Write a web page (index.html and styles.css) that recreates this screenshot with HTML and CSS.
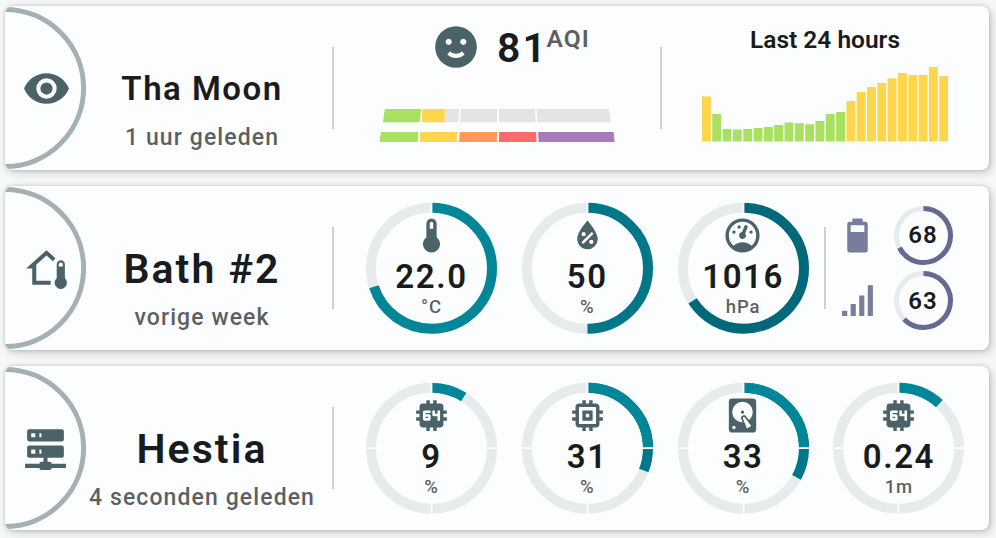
FILE: index.html
```html
<!DOCTYPE html>
<html lang="nl">
<head>
<meta charset="utf-8">
<title>Sensors</title>
<link rel="stylesheet" href="styles.css">
</head>
<body>
<svg class="sprite" aria-hidden="true">
  <symbol id="eye" viewBox="0 0 24 24"><path d="M12,9A3,3 0 0,0 9,12A3,3 0 0,0 12,15A3,3 0 0,0 15,12A3,3 0 0,0 12,9M12,17A5,5 0 0,1 7,12A5,5 0 0,1 12,7A5,5 0 0,1 17,12A5,5 0 0,1 12,17M12,4.5C7,4.5 2.73,7.61 1,12C2.73,16.39 7,19.5 12,19.5C17,19.5 21.27,16.39 23,12C21.27,7.61 17,4.5 12,4.5Z"/></symbol>
  <symbol id="home-thermometer" viewBox="0 0 24 24"><path d="M19 8C20.11 8 21 8.9 21 10V16.76C21.61 17.31 22 18.11 22 19C22 20.66 20.66 22 19 22C17.34 22 16 20.66 16 19C16 18.11 16.39 17.31 17 16.76V10C17 8.9 17.9 8 19 8M19 9C18.45 9 18 9.45 18 10V11H20V10C20 9.45 19.55 9 19 9M12 5.69L7 10.19V18H14.1L14 19L14.1 20H5V12H2L12 3L16.4 6.96C15.89 7.4 15.5 7.97 15.25 8.61L12 5.69Z"/></symbol>
  <symbol id="server" viewBox="0 0 24 24"><path d="M13,19H14A1,1 0 0,1 15,20H22V22H15A1,1 0 0,1 14,23H10A1,1 0 0,1 9,22H2V20H9A1,1 0 0,1 10,19H11V17H4A1,1 0 0,1 3,16V12A1,1 0 0,1 4,11H20A1,1 0 0,1 21,12V16A1,1 0 0,1 20,17H13V19M4,3H20A1,1 0 0,1 21,4V8A1,1 0 0,1 20,9H4A1,1 0 0,1 3,8V4A1,1 0 0,1 4,3M9,7H10V5H9V7M9,15H10V13H9V15M5,5V7H7V5H5M5,13V15H7V13H5Z"/></symbol>
  <symbol id="smile" viewBox="0 0 24 24"><path d="M12,2A10,10 0 0,0 2,12A10,10 0 0,0 12,22A10,10 0 0,0 22,12A10,10 0 0,0 12,2M7,9.5C7,8.7 7.7,8 8.5,8C9.3,8 10,8.7 10,9.5C10,10.3 9.3,11 8.5,11C7.7,11 7,10.3 7,9.5M12,17.23C10.25,17.23 8.71,16.5 7.81,15.42L9.23,14C9.68,14.72 10.75,15.23 12,15.23C13.25,15.23 14.32,14.72 14.77,14L16.19,15.42C15.29,16.5 13.75,17.23 12,17.23M15.5,11C14.7,11 14,10.3 14,9.5C14,8.7 14.7,8 15.5,8C16.3,8 17,8.7 17,9.5C17,10.3 16.3,11 15.5,11Z"/></symbol>
  <symbol id="thermometer" viewBox="0 0 24 24"><path d="M15 13V5A3 3 0 0 0 9 5V13A5 5 0 1 0 15 13M12 4A1 1 0 0 1 13 5V8H11V5A1 1 0 0 1 12 4Z"/></symbol>
  <symbol id="humidity" viewBox="0 0 24 24"><path d="M12,3.25C12,3.25 6,10 6,14C6,17.32 8.69,20 12,20A6,6 0 0,0 18,14C18,10 12,3.25 12,3.25M14.47,9.97L15.53,11.03L9.53,17.03L8.47,15.97M9.75,10A1.25,1.25 0 0,1 11,11.25A1.25,1.25 0 0,1 9.75,12.5A1.25,1.25 0 0,1 8.5,11.25A1.25,1.25 0 0,1 9.75,10M14.25,14.5A1.25,1.25 0 0,1 15.5,15.75A1.25,1.25 0 0,1 14.25,17A1.25,1.25 0 0,1 13,15.75A1.25,1.25 0 0,1 14.25,14.5Z"/></symbol>
  <symbol id="pressure" viewBox="0 0 24 24"><path d="M12,2A10,10 0 0,0 2,12A10,10 0 0,0 12,22A10,10 0 0,0 22,12A10,10 0 0,0 12,2M12,4A8,8 0 0,1 20,12C20,14.4 19,16.5 17.3,18C15.9,16.7 14,16 12,16C10,16 8.2,16.7 6.7,18C5,16.5 4,14.4 4,12A8,8 0 0,1 12,4M14,5.89C13.62,5.9 13.26,6.15 13.1,6.54L11.81,9.77L11.71,10C11,10.13 10.41,10.6 10.14,11.26C9.73,12.29 10.23,13.45 11.26,13.86C12.29,14.27 13.45,13.77 13.86,12.74C14.12,12.08 14,11.32 13.57,10.76L13.67,10.5L14.96,7.29L14.97,7.26C15.17,6.75 14.92,6.17 14.41,5.96C14.28,5.91 14.15,5.89 14,5.89M10,6A1,1 0 0,0 9,7A1,1 0 0,0 10,8A1,1 0 0,0 11,7A1,1 0 0,0 10,6M7,9A1,1 0 0,0 6,10A1,1 0 0,0 7,11A1,1 0 0,0 8,10A1,1 0 0,0 7,9M17,9A1,1 0 0,0 16,10A1,1 0 0,0 17,11A1,1 0 0,0 18,10A1,1 0 0,0 17,9Z"/></symbol>
  <symbol id="battery" viewBox="0 0 24 24"><path d="M16,10H8V6H16M16.67,4H15V2H9V4H7.33A1.33,1.33 0 0,0 6,5.33V20.67C6,21.4 6.6,22 7.33,22H16.67A1.33,1.33 0 0,0 18,20.67V5.33C18,4.6 17.4,4 16.67,4Z"/></symbol>
  <symbol id="signal" viewBox="0 0 24 24"><path d="M3,21H6V18H3M8,21H11V14H8M13,21H16V9H13M18,21H21V3H18V21Z"/></symbol>
  <symbol id="cpu64" viewBox="0 0 24 24"><path fill-rule="evenodd" d="M9,3V5H7A2,2 0 0,0 5,7V9H3V11H5V13H3V15H5V17A2,2 0 0,0 7,19H9V21H11V19H13V21H15V19H17A2,2 0 0,0 19,17V15H21V13H19V11H21V9H19V7A2,2 0 0,0 17,5H15V3H13V5H11V3M8,9H11.5V10.5H8.5V11.25H10.5A1,1 0 0,1 11.5,12.25V14A1,1 0 0,1 10.5,15H8A1,1 0 0,1 7,14V10A1,1 0 0,1 8,9M12.5,9H14V11H15.5V9H17V15H15.5V12.5H13.5A1,1 0 0,1 12.5,11.5M8.5,12.75V13.5H10V12.75"/></symbol>
  <symbol id="memory" viewBox="0 0 24 24"><path d="M17,17H7V7H17M21,11V9H19V7C19,5.89 18.1,5 17,5H15V3H13V5H11V3H9V5H7C5.89,5 5,5.89 5,7V9H3V11H5V13H3V15H5V17A2,2 0 0,0 7,19H9V21H11V19H13V21H15V19H17A2,2 0 0,0 19,17V15H21V13H19V11M13,13H11V11H13M15,9H9V15H15V9Z"/></symbol>
  <symbol id="harddisk" viewBox="0 0 24 24"><path d="M6,2H18A2,2 0 0,1 20,4V20A2,2 0 0,1 18,22H6A2,2 0 0,1 4,20V4A2,2 0 0,1 6,2M12,4A6,6 0 0,0 6,10C6,13.31 8.69,16 12.1,16L11.22,13.77C10.95,13.29 11.11,12.68 11.59,12.4L12.45,11.9C12.93,11.63 13.54,11.79 13.82,12.27L15.74,14.69C17.12,13.59 18,11.9 18,10A6,6 0 0,0 12,4M12,9A1,1 0 0,1 13,10A1,1 0 0,1 12,11A1,1 0 0,1 11,10A1,1 0 0,1 12,9M7,18A1,1 0 0,0 6,19A1,1 0 0,0 7,20A1,1 0 0,0 8,19A1,1 0 0,0 7,18M12.09,13.27L14.58,19.58L17.17,18.08L12.95,12.77L12.09,13.27Z"/></symbol>
</svg>

<main class="cards">
  <section class="card">
    <div class="badge">
      <svg class="arc" viewBox="0 0 82 164"><circle cx="0" cy="82" r="78.6"/></svg>
      <svg class="icon icon-main"><use href="#eye"/></svg>
    </div>
    <div class="name">
      <h2 class="title title-small">Tha Moon</h2>
      <p class="since">1 uur geleden</p>
    </div>
    <div class="divider"></div>
    <div class="air">
      <div class="aqi">
        <svg class="icon icon-smile"><use href="#smile"/></svg>
        <span class="aqi-value">81</span><span class="aqi-unit">AQI</span>
      </div>
      <svg class="levels" viewBox="377 106 240 40">
        <path class="empty" d="M444,109H459L458.3,122.3H444ZM460.8,109H497V122.3H460.1ZM499,109H535.1L535.6,122.3H499ZM536.8,109H608.9L611,122.3H537.4Z"/>
        <path class="good" d="M384.8,109H421L419.8,122.3H383ZM381,132H418.4L417.7,142H379.5Z"/>
        <path class="moderate" d="M422.4,109H444.7V122.3H421.8ZM420.3,132H457.4L457,142H419.7Z"/>
        <path class="sensitive" d="M459.6,132H497V142H459.1Z"/>
        <path class="unhealthy" d="M499,132H536.1L536.6,142H499Z"/>
        <path class="severe" d="M538,132H613.6L614.6,142H538.6Z"/>
      </svg>
    </div>
    <div class="divider"></div>
    <div class="history">
      <h3 class="history-title">Last 24 hours</h3>
      <svg class="chart" viewBox="702 66 247 76">
        <path class="moderate" d="M702,141.6v-45h8.9v45zM846.4,141.6v-40.6h8.9v40.6zM856.7,141.6v-49.6h8.9v49.6zM867,141.6v-54.6h8.9v54.6zM877.3,141.6v-58.6h8.9v58.6zM887.6,141.6v-63.4h8.9v63.4zM898,141.6v-68.6h8.9v68.6zM908.3,141.6v-66.6h8.9v66.6zM918.6,141.6v-66.6h8.9v66.6zM928.9,141.6v-74.6h8.9v74.6zM939.2,141.6v-65.7h8.9v65.7z"/>
        <path class="good" d="M712.3,141.6v-27.6h8.9v27.6zM722.6,141.6v-12.7h8.9v12.7zM732.9,141.6v-12h8.9v12zM743.3,141.6v-12.7h8.9v12.7zM753.6,141.6v-13.6h8.9v13.6zM763.9,141.6v-14.6h8.9v14.6zM774.2,141.6v-16.5h8.9v16.5zM784.5,141.6v-19.2h8.9v19.2zM794.8,141.6v-18.3h8.9v18.3zM805.2,141.6v-17.4h8.9v17.4zM815.5,141.6v-20.6h8.9v20.6zM825.8,141.6v-27.6h8.9v27.6zM836.1,141.6v-29.5h8.9v29.5z"/>
      </svg>
    </div>
  </section>

  <section class="card">
    <div class="badge">
      <svg class="arc" viewBox="0 0 82 164"><circle cx="0" cy="82" r="78.6"/></svg>
      <svg class="icon icon-main"><use href="#home-thermometer"/></svg>
    </div>
    <div class="name">
      <h2 class="title">Bath #2</h2>
      <p class="since">vorige week</p>
    </div>
    <div class="divider"></div>
    <div class="gauges">
      <div class="gauge">
        <svg class="ring" viewBox="-65.5 -65.2 131 131">
          <circle class="track" r="60.5"/>
          <circle class="fill teal" r="60.5" pathLength="360" stroke-dasharray="252 360"/>
          <path class="gap" d="M0,-67V-54"/>
        </svg>
        <div class="reading"><svg class="icon"><use href="#thermometer"/></svg><b>22.0</b><span>°C</span></div>
      </div>
      <div class="gauge">
        <svg class="ring" viewBox="-65.5 -65.2 131 131">
          <circle class="track" r="60.5"/>
          <circle class="fill teal-mid" r="60.5" pathLength="360" stroke-dasharray="180 360"/>
          <path class="gap" d="M0,-67V-54"/>
        </svg>
        <div class="reading"><svg class="icon"><use href="#humidity"/></svg><b>50</b><span>%</span></div>
      </div>
      <div class="gauge">
        <svg class="ring" viewBox="-65.5 -65.2 131 131">
          <circle class="track" r="60.5"/>
          <circle class="fill teal-dark" r="60.5" pathLength="360" stroke-dasharray="237.3 360"/>
          <path class="gap" d="M0,-67V-54"/>
        </svg>
        <div class="reading"><svg class="icon"><use href="#pressure"/></svg><b>1016</b><span>hPa</span></div>
      </div>
    </div>
    <div class="divider divider-status"></div>
    <div class="status">
      <svg class="icon"><use href="#battery"/></svg>
      <div class="mini">
        <svg class="ring" viewBox="-29.5 -29.5 59 59">
          <circle class="track" r="27"/>
          <circle class="fill" r="27" pathLength="360" stroke-dasharray="243 360"/>
        </svg>
        <b>68</b>
      </div>
      <svg class="icon"><use href="#signal"/></svg>
      <div class="mini">
        <svg class="ring" viewBox="-29.5 -29.5 59 59">
          <circle class="track" r="27"/>
          <circle class="fill" r="27" pathLength="360" stroke-dasharray="226 360"/>
        </svg>
        <b>63</b>
      </div>
    </div>
  </section>

  <section class="card">
    <div class="badge">
      <svg class="arc" viewBox="0 0 82 164"><circle cx="0" cy="82" r="78.6"/></svg>
      <svg class="icon icon-main icon-server"><use href="#server"/></svg>
    </div>
    <div class="name">
      <h2 class="title">Hestia</h2>
      <p class="since">4 seconden geleden</p>
    </div>
    <div class="divider"></div>
    <div class="gauges">
      <div class="gauge">
        <svg class="ring" viewBox="-65.5 -65.2 131 131">
          <circle class="track" r="60.5"/>
          <circle class="fill teal" r="60.5" pathLength="360" stroke-dasharray="32.2 360"/>
          <path class="gap" d="M0,-67V-54M0,67V54M-67,0H-54M67,0H54"/>
        </svg>
        <div class="reading"><svg class="icon"><use href="#cpu64"/></svg><b>9</b><span>%</span></div>
      </div>
      <div class="gauge">
        <svg class="ring" viewBox="-65.5 -65.2 131 131">
          <circle class="track" r="60.5"/>
          <circle class="fill teal-mid" r="60.5" pathLength="360" stroke-dasharray="111.6 360"/>
          <circle class="fill teal" r="60.5" pathLength="360" stroke-dasharray="90 360"/>
          <path class="gap" d="M0,-67V-54M0,67V54M-67,0H-54M67,0H54"/>
        </svg>
        <div class="reading"><svg class="icon"><use href="#memory"/></svg><b>31</b><span>%</span></div>
      </div>
      <div class="gauge">
        <svg class="ring" viewBox="-65.5 -65.2 131 131">
          <circle class="track" r="60.5"/>
          <circle class="fill teal-mid" r="60.5" pathLength="360" stroke-dasharray="118.8 360"/>
          <circle class="fill teal" r="60.5" pathLength="360" stroke-dasharray="90 360"/>
          <path class="gap" d="M0,-67V-54M0,67V54M-67,0H-54M67,0H54"/>
        </svg>
        <div class="reading"><svg class="icon"><use href="#harddisk"/></svg><b>33</b><span>%</span></div>
      </div>
      <div class="gauge">
        <svg class="ring" viewBox="-65.5 -65.2 131 131">
          <circle class="track" r="60.5"/>
          <circle class="fill teal" r="60.5" pathLength="360" stroke-dasharray="42.5 360"/>
          <path class="gap" d="M0,-67V-54M0,67V54M-67,0H-54M67,0H54"/>
        </svg>
        <div class="reading"><svg class="icon"><use href="#cpu64"/></svg><b>0.24</b><span>1m</span></div>
      </div>
    </div>
  </section>
</main>
</body>
</html>
```
FILE: styles.css
```css
* {
  box-sizing: border-box;
}

body {
  margin: 0;
  height: 538px;
  overflow: hidden;
  background: #f6f7f9;
  color: #191c1d;
  font-family: Roboto, "Liberation Sans", sans-serif;
}

h2,
h3,
p {
  margin: 0;
}

svg {
  display: block;
}

.sprite {
  display: none;
}

.cards {
  display: flex;
  flex-direction: column;
  gap: 16px;
  padding: 6px 7px 0 5px;
}

.card {
  display: flex;
  height: 164px;
  border-radius: 8px;
  background: #fcfdff;
  box-shadow: 0 0 4px rgba(0, 0, 0, 0.18), 3px 3px 8px rgba(0, 0, 0, 0.16);
}

.icon {
  width: 41px;
  height: 41px;
  fill: #4b6268;
}

.badge {
  display: grid;
  width: 82px;
  height: 164px;
  overflow: hidden;
  border-radius: 8px 0 0 8px;
  align-items: center;
  justify-items: center;
}

.badge > * {
  grid-area: 1 / 1;
}

.arc {
  width: 82px;
  height: 164px;
}

.arc circle {
  fill: none;
  stroke: #a3b1b4;
  stroke-width: 5;
}

.icon-main {
  width: 49px;
  height: 49px;
}

.icon-server {
  margin: 0 1px 1px 0;
}

.name {
  width: 230px;
  margin-right: 15px;
  padding-top: 57px;
  text-align: center;
  white-space: nowrap;
}

.title {
  height: 63px;
  font-size: 41px;
  line-height: 52px;
  font-weight: 600;
  letter-spacing: 2.05px;
}

.title-small {
  font-size: 33px;
  line-height: 51px;
  letter-spacing: 1.5px;
}

.since {
  font-size: 23px;
  line-height: 24px;
  font-weight: 500;
  letter-spacing: 1.1px;
  opacity: 0.7;
}

.divider {
  width: 2px;
  height: 82px;
  margin-top: 41px;
  background: #cfd0d2;
}

.air,
.history {
  display: flex;
  flex-direction: column;
  align-items: center;
  width: 326px;
}

.aqi {
  display: flex;
  align-items: flex-start;
  height: 100px;
  padding: 16px 0 0 27px;
}

.icon-smile {
  width: 50px;
  height: 50px;
  margin-right: 16px;
}

.aqi-value {
  font-size: 41px;
  line-height: 52px;
  font-weight: 600;
  letter-spacing: 2px;
}

.aqi-unit {
  margin-left: -1.5px;
  padding-top: 1px;
  font-size: 24.5px;
  line-height: 32px;
  font-weight: 600;
  letter-spacing: 1.1px;
  opacity: 0.7;
}

.levels {
  width: 240px;
  height: 40px;
}

.empty {
  fill: #e3e4e6;
}

.good {
  fill: #a8e05f;
}

.moderate {
  fill: #fdd64b;
}

.sensitive {
  fill: #ff9b57;
}

.unhealthy {
  fill: #fe6a69;
}

.severe {
  fill: #a97abc;
}

.history-title {
  height: 60px;
  padding-top: 18px;
  font-size: 24.5px;
  line-height: 32px;
  font-weight: 600;
}

.chart {
  width: 247px;
  height: 76px;
}

.gauges {
  display: flex;
  align-items: center;
  gap: 24.8px;
  margin-left: 32px;
}

.gauge,
.mini {
  display: grid;
}

.gauge > *,
.mini > * {
  grid-area: 1 / 1;
}

.gauge {
  width: 131px;
  height: 131px;
}

.ring {
  width: 100%;
  height: 100%;
  overflow: visible;
}

.track,
.fill {
  fill: none;
  stroke-width: 10;
}

.track {
  stroke: #e8ebec;
}

.fill {
  transform: rotate(-90deg);
}

.teal {
  stroke: #008699;
}

.teal-mid {
  stroke: #007788;
}

.teal-dark {
  stroke: #006979;
}

.gap {
  stroke: #fcfdff;
  stroke-width: 1.8;
}

.reading {
  display: flex;
  flex-direction: column;
  align-items: center;
  padding-top: 12px;
}

.reading .icon {
  margin-right: 0.5px;
}

.reading b {
  font-size: 33px;
  line-height: 41px;
  font-weight: 600;
  letter-spacing: 1.6px;
}

.reading span {
  font-size: 18.5px;
  line-height: 20px;
  font-weight: 500;
  letter-spacing: 0.9px;
  opacity: 0.7;
}

.divider-status {
  margin-left: 15px;
}

.status {
  display: grid;
  grid-template-columns: 41px 59px;
  column-gap: 16px;
  row-gap: 6.5px;
  align-content: center;
  align-items: center;
  margin-left: 11px;
}

.status .icon {
  fill: #777d9a;
}

.mini {
  width: 59px;
  height: 59px;
  place-items: center;
}

.mini .track,
.mini .fill {
  stroke-width: 5;
}

.mini .fill {
  stroke: #646a90;
}

.mini b {
  font-size: 24px;
  line-height: 28px;
  font-weight: 600;
  letter-spacing: 1.2px;
}
```
